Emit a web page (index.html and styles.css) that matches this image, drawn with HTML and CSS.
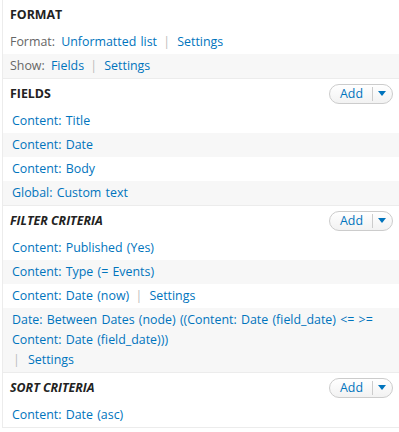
FILE: index.html
```html
<!DOCTYPE html>
<html lang="en">
<head>
    <meta charset="UTF-8">
    <meta name="viewport" content="width=device-width, initial-scale=1.0">
    <title>Views - Display settings</title>
    <link rel="stylesheet" href="styles.css">
</head>
<body>
    <div class="views-column">
        <div class="bucket">
            <div class="bucket-header">
                <h3 class="bucket-title">Format</h3>
            </div>
            <div class="bucket-row odd format-row">
                <span class="label">Format:</span> <a href="#">Unformatted list</a> <span class="sep">|</span> <a href="#">Settings</a>
            </div>
            <div class="bucket-row even format-row">
                <span class="label">Show:</span> <a href="#">Fields</a> <span class="sep">|</span> <a href="#">Settings</a>
            </div>
        </div>

        <div class="bucket">
            <div class="bucket-header">
                <h3 class="bucket-title">Fields</h3>
                <div class="add-button"><span class="add-label">Add</span><span class="add-toggle"><svg width="8" height="5" viewBox="0 0 8 5"><path d="M0 0h8L4 5z" fill="#0074bd"/></svg></span></div>
            </div>
            <div class="bucket-row odd"><a href="#">Content: Title</a></div>
            <div class="bucket-row even"><a href="#">Content: Date</a></div>
            <div class="bucket-row odd"><a href="#">Content: Body</a></div>
            <div class="bucket-row even"><a href="#">Global: Custom text</a></div>
        </div>

        <div class="bucket">
            <div class="bucket-header">
                <h3 class="bucket-title italic">Filter criteria</h3>
                <div class="add-button"><span class="add-label">Add</span><span class="add-toggle"><svg width="8" height="5" viewBox="0 0 8 5"><path d="M0 0h8L4 5z" fill="#0074bd"/></svg></span></div>
            </div>
            <div class="bucket-row odd"><a href="#">Content: Published (Yes)</a></div>
            <div class="bucket-row even"><a href="#">Content: Type (= Events)</a></div>
            <div class="bucket-row odd"><a href="#">Content: Date (now)</a> <span class="sep">|</span> <a href="#">Settings</a></div>
            <div class="bucket-row even"><a href="#">Date: Between Dates (node) ((Content: Date (field_date) &lt;= &gt;= Content: Date (field_date)))</a><br><span class="sep first">|</span> <a href="#">Settings</a></div>
        </div>

        <div class="bucket last">
            <div class="bucket-header">
                <h3 class="bucket-title italic">Sort criteria</h3>
                <div class="add-button"><span class="add-label">Add</span><span class="add-toggle"><svg width="8" height="5" viewBox="0 0 8 5"><path d="M0 0h8L4 5z" fill="#0074bd"/></svg></span></div>
            </div>
            <div class="bucket-row odd"><a href="#">Content: Date (asc)</a></div>
        </div>
    </div>
</body>
</html>
```

FILE: styles.css
```css
body {
    margin: 0;
    padding: 0 0 0 2px;
    font-family: "Open Sans", sans-serif;
    font-size: 12.4px;
    word-spacing: 1px;
    color: #555;
    background-color: #ffffff;
}

a {
    color: #0074bd;
    text-decoration: none;
}

.views-column {
    border-left: 1px solid #ececec;
    border-bottom: 1px solid #ececec;
}

.bucket {
    border-bottom: 1px solid #ececec;
}

.bucket.last {
    border-bottom: none;
}

.bucket-header {
    display: flex;
    justify-content: space-between;
    align-items: center;
    height: 29px;
    padding: 0 6px 1px 7px;
}

.bucket-title {
    margin: 0;
    font-size: 12.4px;
    font-weight: bold;
    text-transform: uppercase;
    color: #222;
    word-spacing: 0;
}

.bucket-title.italic {
    font-style: italic;
}

.bucket-row {
    padding: 2px 9px;
    line-height: 20px;
}

.bucket-row.format-row {
    padding-left: 7px;
}

.bucket-row.even {
    background-color: #f7f7f7;
}

.label {
    color: #666;
    margin-right: 2px;
}

.sep {
    color: #bbb;
    margin: 0 3px 0 2px;
}

.sep.first {
    margin: 0 4px 0 1px;
}

.add-button {
    display: flex;
    align-items: center;
    height: 18px;
    border: 1px solid #ccc;
    border-radius: 10px;
    background: linear-gradient(#ffffff, #f2f2f2);
    word-spacing: 0;
}

.add-label {
    color: #0074bd;
    padding: 0 9px 0 10px;
    line-height: 18px;
}

.add-toggle {
    display: flex;
    align-items: center;
    height: 14px;
    border-left: 1px solid #ccc;
    padding: 0 6px 0 5px;
}
```
